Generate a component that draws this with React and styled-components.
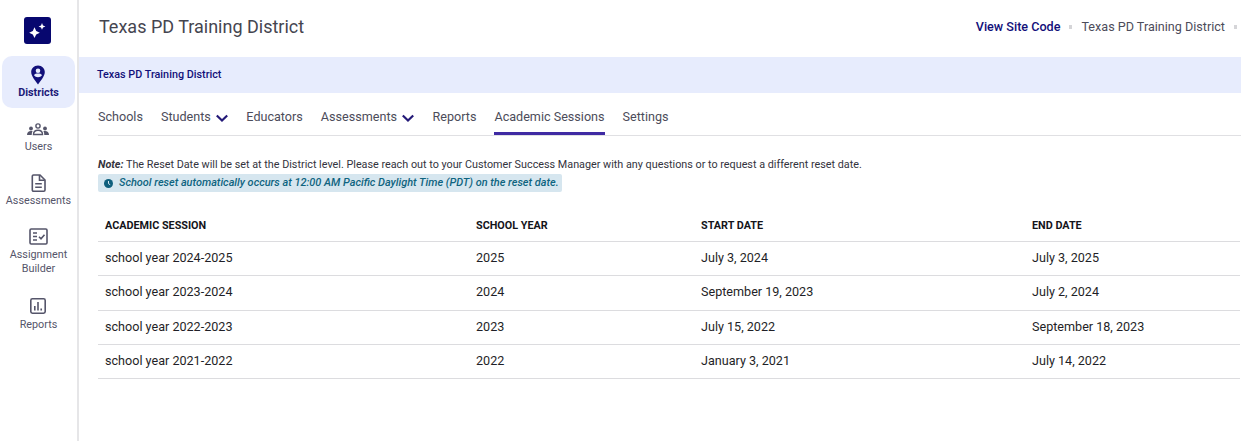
import React from 'react';
import styled, { createGlobalStyle } from 'styled-components';

const GlobalStyle = createGlobalStyle`
  html, body {
    margin: 0;
    padding: 0;
    background: #fff;
    font-family: Roboto, "Liberation Sans", sans-serif;
  }
  * { box-sizing: border-box; }
`;

const Page = styled.div`
  display: flex;
  width: 1241px;
  height: 441px;
  overflow: hidden;
`;

const Sidebar = styled.nav`
  flex: 0 0 79px;
  display: flex;
  flex-direction: column;
  align-items: stretch;
  padding: 17px 2px 0 2px;
  border-right: 2px solid #e6e6e8;
`;

const Logo = styled.div`
  align-self: center;
  width: 27px;
  height: 27px;
  margin: 0 0 12px -2px;
  border-radius: 3px;
  background: #07076f;
  display: flex;
  align-items: center;
  justify-content: center;
`;

const NavItem = styled.a`
  display: flex;
  flex-direction: column;
  align-items: center;
  height: ${(p) => p.$height}px;
  margin-bottom: ${(p) => (p.$active ? 14 : 0)}px;
  padding-top: ${(p) => (p.$active ? 9 : 0)}px;
  border-radius: 10px;
  background: ${(p) => (p.$active ? '#e7ecfd' : 'transparent')};
  color: ${(p) => (p.$active ? '#1d1a78' : '#55556a')};
  font-size: 10.8px;
  font-weight: ${(p) => (p.$active ? 700 : 400)};
  line-height: 14px;
  text-align: center;
  svg {
    margin-bottom: ${(p) => (p.$active ? 1 : 2)}px;
    margin-right: 1px;
  }
`;

const Main = styled.main`
  flex: 1;
  min-width: 0;
`;

const TopBar = styled.header`
  height: 57px;
  display: flex;
  align-items: center;
  justify-content: space-between;
  padding: 0 4px 4px 20px;
`;

const Title = styled.h1`
  margin: 0;
  font-size: 18px;
  font-weight: 400;
  color: #45454f;
`;

const Crumbs = styled.div`
  display: flex;
  align-items: center;
  font-size: 12.6px;
  color: #4c4c5a;
`;

const CrumbLink = styled.a`
  color: #12107a;
  font-weight: 500;
`;

const Dot = styled.span`
  width: 3px;
  height: 4px;
  margin: 1px 9px 0 9px;
  background: #d5d5d8;
  &:last-child { margin-right: 0; }
`;

const Banner = styled.div`
  height: 36px;
  display: flex;
  align-items: center;
  padding: 0 0 1px 18px;
  background: #e7ecfd;
  color: #12107a;
  font-size: 10.8px;
  font-weight: 500;
`;

const Tabs = styled.div`
  height: 43px;
  margin-left: 19px;
  display: flex;
  gap: 18px;
  border-bottom: 1px solid #e0e0e3;
`;

const Tab = styled.a`
  display: flex;
  align-items: center;
  gap: 5px;
  height: 42px;
  padding: 10px 0 3px;
  font-size: 12.6px;
  color: #4c4c5a;
  border-bottom: 3px solid ${(p) => (p.$active ? '#3f2aa3' : 'transparent')};
  svg { margin-top: 3px; }
`;

const Notes = styled.div`
  margin: 22px 0 0 19px;
  font-size: 10.8px;
  color: #33333d;
  line-height: 14px;
`;

const Reset = styled.div`
  display: flex;
  align-items: center;
  gap: 6px;
  width: fit-content;
  height: 18px;
  margin-top: 2px;
  padding: 0 3px 0 6px;
  background: #d6e6ef;
  color: #0f6480;
  font-size: 10.93px;
  font-style: italic;
  font-weight: 500;
  border-radius: 2px;
`;

const Table = styled.table`
  width: 1142px;
  margin: 17.3px 0 0 19px;
  border-collapse: collapse;
  table-layout: fixed;
  color: #1f1f27;
`;

const Th = styled.th`
  width: ${(p) => p.$width}px;
  height: 32px;
  padding: 1px 0 0 7px;
  font-size: 10.8px;
  font-weight: 700;
  text-align: left;
  color: #14141a;
  border-bottom: 1px solid #dcdcdf;
`;

const Td = styled.td`
  height: 34.4px;
  padding: 0 0 2px 7px;
  font-size: 12.6px;
  border-bottom: 1px solid #dcdcdf;
`;

const Chevron = () => (
  <svg width="12.5" height="10" viewBox="0 0 12.5 10" fill="none">
    <path d="M.8 2.500L6 7.500L11.200 2.500" stroke="#241a78" strokeWidth="2.2" />
  </svg>
);

const icons = {
  pin: (
    <svg width="16" height="20" viewBox="0 0 16 20">
      <path fillRule="evenodd" fill="#12107a" d="M8 0.5C3.9 0.5 1.2 3.5 1.2 7.1c0 4.4 4.6 9.4 6.8 12.4 2.2-3 6.8-8 6.8-12.4C14.8 3.5 12.1 0.5 8 0.5zM8 3.4a2.3 2.3 0 1 1 0 4.6 2.3 2.3 0 0 1 0-4.6zM4 10.2c.8-1.2 2.4-1.6 4-1.6s3.2.4 4 1.6c-.9 1.2-2.3 2-4 2s-3.1-.8-4-2z" />
    </svg>
  ),
  users: (
    <svg width="24" height="16" viewBox="0 0 24 16" fill="#55556a">
      <circle cx="12" cy="4" r="2.1" fill="none" stroke="#55556a" strokeWidth="1.4" />
      <path d="M7.500 12.500c0-2.800 2-4.200 4.500-4.200s4.500 1.400 4.500 4.200z" fill="none" stroke="#55556a" strokeWidth="1.4" />
      <circle cx="5" cy="6.500" r="1.900" />
      <circle cx="19" cy="6.500" r="1.900" />
      <path d="M1 13c0-2.400 1.600-4 4-4 .7 0 1.200.1 1.600.3-.6.9-.9 2.100-.9 3.700zM23 13c0-2.400-1.600-4-4-4-.7 0-1.200.1-1.600.3.6.9.9 2.100.9 3.700z" />
    </svg>
  ),
  doc: (
    <svg width="15" height="18" viewBox="0 0 15 18" fill="none" stroke="#55556a" strokeWidth="1.6">
      <path d="M2.500 1h6.500l5 5v10a1.200 1.200 0 0 1-1.200 1.200H2.500A1.200 1.200 0 0 1 1.300 16V2.200A1.200 1.200 0 0 1 2.500 1z" />
      <path d="M8.500 1v5.200h5.200M4.200 9.800h6.600M4.200 13.200h6.600" />
    </svg>
  ),
  builder: (
    <svg width="19" height="18" viewBox="0 0 19 18" fill="none" stroke="#55556a" strokeWidth="1.6">
      <rect x="1" y="1" width="17" height="15" rx="1.200" />
      <path d="M4 5h4M4 8.500h4M4 12h4M10 8.800l2 2 3.500-4" />
    </svg>
  ),
  chart: (
    <svg width="16" height="19" viewBox="0 -1 16 19" fill="none" stroke="#55556a" strokeWidth="1.6">
      <rect x=".8" y=".8" width="14.400" height="14.400" rx="1.600" />
      <path d="M4.800 12.500V8M8 12.500V4M11.200 12.500v-2" />
    </svg>
  ),
};

const navItems = [
  { label: 'Districts', icon: 'pin', height: 52, active: true },
  { label: 'Users', icon: 'users', height: 52 },
  { label: 'Assessments', icon: 'doc', height: 54 },
  { label: ['Assignment', 'Builder'], icon: 'builder', height: 69 },
  { label: 'Reports', icon: 'chart', height: 40 },
];

const tabs = [
  { label: 'Schools' },
  { label: 'Students', menu: true },
  { label: 'Educators' },
  { label: 'Assessments', menu: true },
  { label: 'Reports' },
  { label: 'Academic Sessions', active: true },
  { label: 'Settings' },
];

const columns = [
  { label: 'ACADEMIC SESSION', width: 371 },
  { label: 'SCHOOL YEAR', width: 225 },
  { label: 'START DATE', width: 331 },
  { label: 'END DATE', width: 215 },
];

const rows = [
  ['school year 2024-2025', '2025', 'July 3, 2024', 'July 3, 2025'],
  ['school year 2023-2024', '2024', 'September 19, 2023', 'July 2, 2024'],
  ['school year 2022-2023', '2023', 'July 15, 2022', 'September 18, 2023'],
  ['school year 2021-2022', '2022', 'January 3, 2021', 'July 14, 2022'],
];

export default function App() {
  return (
    <Page>
      <GlobalStyle />
      <Sidebar>
        <Logo>
          <svg width="19" height="19" viewBox="0 0 19 19" fill="#fff">
            <path d="M6.500 6.300L8.200 10 11.800 11.700 8.200 13.400 6.500 17 4.800 13.400 1.200 11.700 4.800 10z" />
            <path d="M14 2l1 2.400 2.400 1-2.400 1L14 8.800l-1-2.400-2.400-1 2.400-1z" />
          </svg>
        </Logo>
        {navItems.map((item) => (
          <NavItem key={item.icon} $active={item.active} $height={item.height}>
            {icons[item.icon]}
            {[].concat(item.label).map((line) => (
              <span key={line}>{line}</span>
            ))}
          </NavItem>
        ))}
      </Sidebar>
      <Main>
        <TopBar>
          <Title>Texas PD Training District</Title>
          <Crumbs>
            <CrumbLink>View Site Code</CrumbLink>
            <Dot />
            Texas PD Training District
            <Dot />
          </Crumbs>
        </TopBar>
        <Banner>Texas PD Training District</Banner>
        <Tabs>
          {tabs.map((tab) => (
            <Tab key={tab.label} $active={tab.active}>
              {tab.label}
              {tab.menu && <Chevron />}
            </Tab>
          ))}
        </Tabs>
        <Notes>
          <div>
            <b><i>Note:</i></b> The Reset Date will be set at the District level. Please reach out to your Customer Success Manager with any questions or to request a different reset date.
          </div>
          <Reset>
            <svg width="9" height="9" viewBox="0 0 9 9">
              <circle cx="4.500" cy="4.500" r="4.500" fill="#0f5f7c" />
              <path d="M4.500 2v2.700l1.700 1" fill="none" stroke="#d6e6ef" strokeWidth="1" />
            </svg>
            School reset automatically occurs at 12:00 AM Pacific Daylight Time (PDT) on the reset date.
          </Reset>
        </Notes>
        <Table>
          <thead>
            <tr>
              {columns.map((c) => (
                <Th key={c.label} $width={c.width}>{c.label}</Th>
              ))}
            </tr>
          </thead>
          <tbody>
            {rows.map((row) => (
              <tr key={row[0]}>
                {row.map((cell) => (
                  <Td key={cell}>{cell}</Td>
                ))}
              </tr>
            ))}
          </tbody>
        </Table>
      </Main>
    </Page>
  );
}
